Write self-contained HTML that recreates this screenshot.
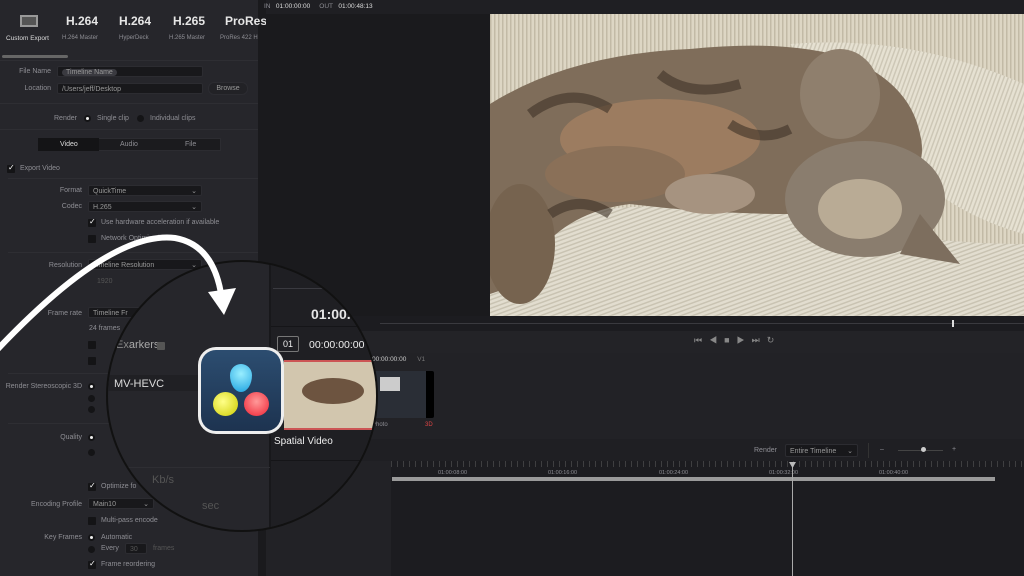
<!DOCTYPE html><html><head><meta charset="utf-8"><style>
*{margin:0;padding:0;box-sizing:border-box}
body{width:1024px;height:576px;overflow:hidden;background:#1d1d21;font-family:"Liberation Sans",sans-serif;color:#a9a9ae;position:relative}
.a{position:absolute}
.t{position:absolute;font-size:7px;color:#8e8e94;white-space:nowrap}
.r{text-align:right}
.box{position:absolute;background:#18181b;border:1px solid #2c2c31;border-radius:2px;font-size:7px;color:#999;padding:1px 4px;line-height:9px}
.cb{position:absolute;width:8px;height:8px;background:#141416;border-radius:1px}
.rad{position:absolute;width:7px;height:7px;border-radius:50%;background:#141416}
.rad.on::after{content:"";position:absolute;left:2px;top:2px;width:3px;height:3px;border-radius:50%;background:#eee}
.ck::after{content:"✓";position:absolute;left:1px;top:-2px;font-size:8px;color:#fff}
.hl{position:absolute;height:1px;background:#2e2e33}
</style></head><body>
<!-- left panel -->
<div class="a" style="left:0;top:0;width:258px;height:576px;background:#26262b"></div>
<div class="a" style="left:258px;top:0;width:8px;height:576px;background:#1a1a1d"></div>
<div class="a" style="left:20px;top:15px;width:18px;height:12px;border:2px solid #999;background:#555"></div>
<div class="t" style="left:6px;top:35px;color:#ddd;font-size:6.5px">Custom Export</div>
<div class="t" style="left:66px;top:14px;font-size:12px;color:#e6e6e6;font-weight:bold">H.264</div>
<div class="t" style="left:62px;top:35px;font-size:6px">H.264 Master</div>
<div class="t" style="left:119px;top:14px;font-size:12px;color:#e6e6e6;font-weight:bold">H.264</div>
<div class="t" style="left:119px;top:35px;font-size:6px">HyperDeck</div>
<div class="t" style="left:173px;top:14px;font-size:12px;color:#e6e6e6;font-weight:bold">H.265</div>
<div class="t" style="left:169px;top:35px;font-size:6px">H.265 Master</div>
<div class="t" style="left:225px;top:14px;font-size:12px;color:#e6e6e6;font-weight:bold">ProRes</div>
<div class="t" style="left:220px;top:35px;font-size:6px">ProRes 422 H</div>
<div class="a" style="left:2px;top:55px;width:66px;height:3px;background:#666;border-radius:2px"></div>
<div class="hl" style="left:0;top:60px;width:258px"></div>
<div class="t r" style="left:0;top:68px;width:51px">File Name</div>
<div class="box" style="left:57px;top:66px;width:146px;height:11px"><span style="background:#3a3a40;border-radius:5px;padding:0 4px">Timeline Name</span></div>
<div class="t r" style="left:0;top:85px;width:51px">Location</div>
<div class="box" style="left:57px;top:83px;width:146px;height:11px">/Users/jeff/Desktop</div>
<div class="box" style="left:208px;top:82px;width:40px;height:13px;border-radius:6px;text-align:center;background:#222226">Browse</div>
<div class="hl" style="left:0;top:103px;width:258px"></div>
<div class="t" style="left:54px;top:115px">Render</div>
<div class="rad on" style="left:84px;top:115px"></div><div class="t" style="left:97px;top:115px">Single clip</div>
<div class="rad" style="left:137px;top:115px"></div><div class="t" style="left:150px;top:115px">Individual clips</div>
<div class="hl" style="left:0;top:129px;width:258px"></div>
<div class="a" style="left:38px;top:138px;width:183px;height:13px;background:#1b1b1e;border:1px solid #2c2c31"></div>
<div class="a" style="left:38px;top:138px;width:61px;height:13px;background:#141416"></div>
<div class="t" style="left:60px;top:141px;color:#ddd">Video</div>
<div class="t" style="left:120px;top:141px">Audio</div>
<div class="t" style="left:185px;top:141px">File</div>
<div class="cb ck" style="left:7px;top:165px"></div><div class="t" style="left:20px;top:165px">Export Video</div>
<div class="hl" style="left:8px;top:178px;width:250px"></div>
<div class="t r" style="left:0;top:187px;width:82px">Format</div>
<div class="box" style="left:88px;top:185px;width:114px;height:11px">QuickTime<span style="float:right">⌄</span></div>
<div class="t r" style="left:0;top:203px;width:82px">Codec</div>
<div class="box" style="left:88px;top:201px;width:114px;height:11px">H.265<span style="float:right">⌄</span></div>
<div class="cb ck" style="left:88px;top:219px"></div><div class="t" style="left:101px;top:219px">Use hardware acceleration if available</div>
<div class="cb" style="left:88px;top:235px"></div><div class="t" style="left:101px;top:235px">Network Optimization</div>
<div class="hl" style="left:8px;top:252px;width:250px"></div>
<div class="t r" style="left:0;top:262px;width:82px">Resolution</div>
<div class="box" style="left:88px;top:259px;width:114px;height:11px">Timeline Resolution<span style="float:right">⌄</span></div>
<div class="t" style="left:97px;top:278px;color:#555">1920</div>
<div class="t r" style="left:0;top:310px;width:82px">Frame rate</div>
<div class="box" style="left:88px;top:307px;width:60px;height:11px">Timeline Fr</div>
<div class="t" style="left:89px;top:325px">24 frames</div>
<div class="cb" style="left:88px;top:341px"></div><div class="cb" style="left:88px;top:357px"></div>
<div class="hl" style="left:8px;top:373px;width:250px"></div>
<div class="t r" style="left:0;top:383px;width:82px">Render Stereoscopic 3D</div>
<div class="rad on" style="left:88px;top:383px"></div><div class="rad" style="left:88px;top:395px"></div><div class="rad" style="left:88px;top:406px"></div>
<div class="hl" style="left:8px;top:423px;width:250px"></div>
<div class="t r" style="left:0;top:434px;width:82px">Quality</div>
<div class="rad on" style="left:88px;top:434px"></div><div class="rad" style="left:88px;top:449px"></div>
<div class="cb ck" style="left:88px;top:483px"></div><div class="t" style="left:101px;top:483px">Optimize fo</div>
<div class="t r" style="left:0;top:501px;width:82px">Encoding Profile</div>
<div class="box" style="left:88px;top:498px;width:66px;height:11px">Main10<span style="float:right">⌄</span></div>
<div class="cb" style="left:88px;top:517px"></div><div class="t" style="left:101px;top:517px">Multi-pass encode</div>
<div class="t r" style="left:0;top:534px;width:82px">Key Frames</div>
<div class="rad on" style="left:88px;top:534px"></div><div class="t" style="left:101px;top:534px">Automatic</div>
<div class="rad" style="left:88px;top:546px"></div><div class="t" style="left:101px;top:545px">Every</div>
<div class="box" style="left:125px;top:543px;width:22px;height:11px;color:#555">30</div><div class="t" style="left:153px;top:545px;color:#555">frames</div>
<div class="cb ck" style="left:88px;top:561px"></div><div class="t" style="left:101px;top:561px">Frame reordering</div>

<!-- right area -->
<div class="a" style="left:266px;top:0;width:758px;height:14px;background:#1f1f23"></div>
<div class="t" style="left:264px;top:3px;font-size:6.5px">IN &nbsp; <span style="color:#ddd">01:00:00:00</span> &nbsp; &nbsp; OUT &nbsp; <span style="color:#ddd">01:00:48:13</span></div>
<div class="a" style="left:266px;top:14px;width:224px;height:302px;background:#1a1a1d"></div>
<svg class="a" style="left:490px;top:14px" width="534" height="302" viewBox="0 0 534 302">
<defs><pattern id="st" width="4" height="4" patternUnits="userSpaceOnUse"><rect width="4" height="4" fill="#ddd6c4"/><rect width="1.5" height="4" fill="#c2baa6"/></pattern>
<pattern id="st2" width="4" height="4" patternUnits="userSpaceOnUse" patternTransform="rotate(70)"><rect width="4" height="4" fill="#e2ddcf"/><rect width="1.5" height="4" fill="#c9c3b2"/></pattern>
<pattern id="st3" width="4" height="4" patternUnits="userSpaceOnUse" patternTransform="rotate(20)"><rect width="4" height="4" fill="#e6e1d2"/><rect width="1.5" height="4" fill="#cdc7b6"/></pattern></defs>
<rect width="534" height="302" fill="url(#st)"/>
<path d="M300 30 Q420 20 534 70 L534 220 Q460 200 400 140Z" fill="url(#st3)"/>
<path d="M0 210 Q160 180 300 200 Q420 230 534 230 L534 302 L0 302Z" fill="url(#st2)"/>
<path d="M0 90 Q80 40 200 35 Q300 25 360 45 Q420 70 430 120 Q440 160 400 180 L300 200 Q220 200 140 190 Q60 200 30 270 L0 280Z" fill="#7f6d5a"/>
<ellipse cx="170" cy="125" rx="100" ry="40" fill="#9c7c60"/>
<ellipse cx="125" cy="160" rx="70" ry="28" fill="#8a7058"/>
<ellipse cx="220" cy="180" rx="45" ry="20" fill="#a69380"/>
<ellipse cx="350" cy="80" rx="40" ry="45" fill="#8f7f6d"/>
<ellipse cx="375" cy="185" rx="80" ry="58" fill="#8a7d6e"/>
<ellipse cx="370" cy="195" rx="42" ry="30" fill="#b9ab95"/>
<path d="M430 200 L470 250 L410 240Z" fill="#7d6e5e"/>
<ellipse cx="30" cy="230" rx="35" ry="60" fill="#76634f"/>
<path d="M40 100 Q80 70 120 95 M170 60 Q200 85 250 70 M240 110 Q270 130 300 115 M60 200 Q90 180 120 200" stroke="#3e3226" stroke-width="10" fill="none" opacity=".6"/>
</svg>
<div class="a" style="left:266px;top:316px;width:758px;height:15px;background:#1c1c20"></div>
<div class="hl" style="left:380px;top:323px;width:644px;background:#3a3a3f"></div>
<div class="a" style="left:952px;top:320px;width:2px;height:7px;background:#ddd"></div>
<div class="a" style="left:266px;top:331px;width:758px;height:22px;background:#232327"></div>
<div class="t" style="left:694px;top:335px;font-size:9px;color:#888;letter-spacing:7px">⏮◀■▶⏭↻</div>
<div class="a" style="left:266px;top:353px;width:758px;height:86px;background:#222226"></div>
<div class="t" style="left:372px;top:356px;font-size:6.5px;color:#ccc">00:00:00:00 &nbsp; &nbsp; &nbsp;<span style="color:#777">V1</span></div>
<div class="a" style="left:372px;top:371px;width:62px;height:47px;background:#2a2e36;border-radius:2px;overflow:hidden"><div class="a" style="left:8px;top:6px;width:20px;height:14px;background:#ccc"></div><div class="a" style="left:54px;top:0;width:8px;height:47px;background:#000"></div></div>
<div class="t" style="left:372px;top:422px;font-size:6px">Photo</div><div class="t" style="left:425px;top:422px;font-size:6px;color:#d44">3D</div>
<div class="a" style="left:266px;top:439px;width:758px;height:22px;background:#1f1f23"></div>
<div class="t" style="left:754px;top:447px">Render</div>
<div class="box" style="left:785px;top:444px;width:73px;height:13px;line-height:11px">Entire Timeline <span style="float:right">⌄</span></div>
<div class="a" style="left:868px;top:443px;width:1px;height:15px;background:#333"></div>
<div class="t" style="left:880px;top:446px">–</div><div class="hl" style="left:898px;top:450px;width:45px;background:#444"></div>
<div class="a" style="left:921px;top:447px;width:5px;height:5px;border-radius:50%;background:#ccc"></div><div class="t" style="left:952px;top:446px">+</div>
<div class="a" style="left:266px;top:461px;width:125px;height:115px;background:#222226"></div>
<div class="a" style="left:391px;top:461px;width:633px;height:115px;background:#1c1c20"></div>
<div class="a" style="left:391px;top:461px;width:633px;background:repeating-linear-gradient(90deg,#555 0 1px,transparent 1px 6px);opacity:.6;height:6px"></div>
<div class="t" style="left:438px;top:470px;font-size:5.5px">01:00:08:00</div>
<div class="t" style="left:548px;top:470px;font-size:5.5px">01:00:16:00</div>
<div class="t" style="left:659px;top:470px;font-size:5.5px">01:00:24:00</div>
<div class="t" style="left:769px;top:470px;font-size:5.5px">01:00:32:00</div>
<div class="t" style="left:879px;top:470px;font-size:5.5px">01:00:40:00</div>
<div class="a" style="left:392px;top:477px;width:603px;height:4px;background:#9a9a9a"></div>
<div class="a" style="left:792px;top:463px;width:1px;height:113px;background:#aaa"></div>
<div class="a" style="left:789px;top:462px;width:7px;height:6px;background:#bbb;clip-path:polygon(0 0,100% 0,50% 100%)"></div>

<!-- magnifier -->
<div class="a" style="left:106px;top:260px;width:272px;height:272px;border-radius:50%;overflow:hidden;border:2px solid #111;background:#26262b">
 <div class="a" style="left:162px;top:0;width:120px;height:280px;background:#1f1f23"></div>
 <div class="a" style="left:161px;top:0;width:2px;height:280px;background:#18181b"></div>
 <div class="hl" style="left:165px;top:26px;width:100px;background:#3a3a40"></div>
 <div class="t" style="left:203px;top:44px;font-size:14px;color:#e6e6e6;font-weight:bold">01:00.</div>
 <div class="hl" style="left:163px;top:64px;width:120px;background:#151518"></div>
 <div class="a" style="left:169px;top:74px;width:22px;height:16px;border:1px solid #777;border-radius:2px;color:#eee;font-size:9px;text-align:center;line-height:14px">01</div>
 <div class="t" style="left:201px;top:76px;font-size:10.5px;color:#eee">00:00:00:00 🔈</div>
 <div class="a" style="left:176px;top:98px;width:100px;height:70px;background:#d2c6ae;border-top:2px solid #c55;border-bottom:2px solid #c55"><div class="a" style="left:18px;top:16px;width:62px;height:26px;border-radius:50%;background:#6d5440"></div></div>
 <div class="t" style="left:166px;top:174px;font-size:10px;color:#eee">Spatial Video</div>
 <div class="hl" style="left:163px;top:198px;width:120px;background:#151518"></div>
 <div class="t" style="left:244px;top:207px;font-size:12px;color:#ddd">0</div>
 <div class="t" style="left:8px;top:77px;font-size:11px;color:#888">Ex<span style="color:#aaa">arkers</span></div>
 <div class="a" style="left:44px;top:80px;width:8px;height:8px;background:#555;border-radius:1px;left:49px"></div>
 <div class="a" style="left:0;top:113px;width:162px;height:16px;background:#202024"></div>
 <div class="t" style="left:6px;top:116px;font-size:11px;color:#ddd">MV-HEVC</div>
 <div class="hl" style="left:0;top:205px;width:162px;background:#2e2e33"></div>
 <div class="t" style="left:44px;top:212px;font-size:11px;color:#555">Kb/s</div>
 <div class="t" style="left:94px;top:238px;font-size:11px;color:#555">sec</div>
</div>
<!-- logo -->
<div class="a" style="left:198px;top:347px;width:86px;height:87px;border-radius:18px;background:#eee;padding:3px">
 <div style="width:80px;height:81px;border-radius:15px;background:linear-gradient(#2c4d70,#1d3350);position:relative">
 <div class="a" style="left:29px;top:14px;width:22px;height:28px;border-radius:50% 50% 50% 50%/40% 40% 60% 60%;background:radial-gradient(circle at 50% 35%,#9ef,#1aa0e0)"></div>
 <div class="a" style="left:12px;top:42px;width:25px;height:24px;border-radius:50%;background:radial-gradient(circle at 40% 40%,#ff8,#cc0)"></div>
 <div class="a" style="left:43px;top:42px;width:25px;height:24px;border-radius:50%;background:radial-gradient(circle at 50% 40%,#f99,#e23)"></div>
 </div></div>
<!-- arrow -->
<svg class="a" style="left:0;top:220px" width="260" height="140"><path d="M-5 132 Q110 10 175 18 Q215 25 222 80" stroke="#fff" stroke-width="6" fill="none"/><path d="M208 72 L224 95 L236 68 Z" fill="#fff"/></svg>
</body></html>
